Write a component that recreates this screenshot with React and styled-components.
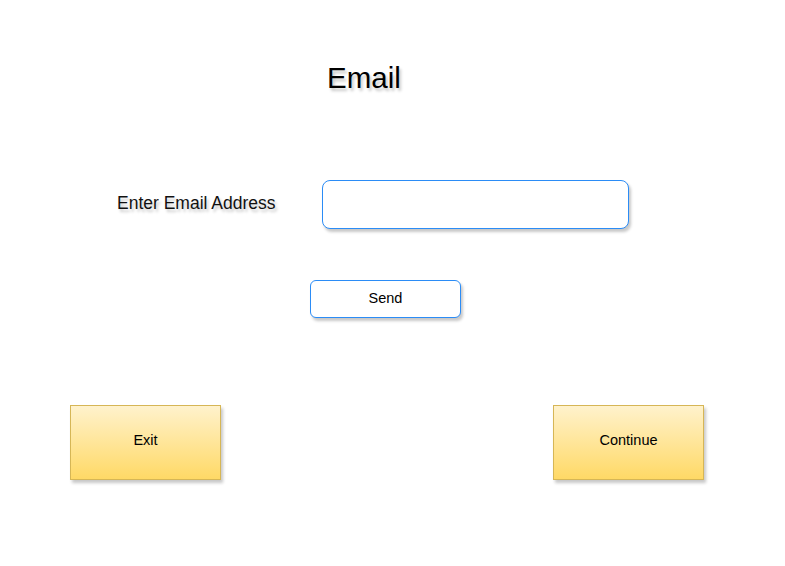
import React from "react";
import styled, { createGlobalStyle } from "styled-components";

const GlobalStyle = createGlobalStyle`
  html, body {
    margin: 0;
    padding: 0;
    background: #ffffff;
  }
  body {
    font-family: "Liberation Sans", Arial, Helvetica, sans-serif;
    color: #000000;
  }
`;

function App() {
  return (
    <>
      <GlobalStyle />
      <Page>
        <Title>Email</Title>
        <FormRow>
          <Label>Enter Email Address</Label>
          <Input type="text" />
        </FormRow>
        <SendButton>Send</SendButton>
        <Footer>
          <ActionButton>Exit</ActionButton>
          <ActionButton>Continue</ActionButton>
        </Footer>
      </Page>
    </>
  );
}

export default App;

const shadowText = "2px 3px 3px rgba(0, 0, 0, 0.22)";
const shadowBox = "2px 3px 3px rgba(0, 0, 0, 0.22)";

const Page = styled.div`
  width: 785px;
  height: 566px;
  display: flex;
  flex-direction: column;
  align-items: flex-start;
  padding-top: 63px;
  box-sizing: border-box;
`;

const Title = styled.h1`
  margin: 0 0 0 327px;
  font-size: 29.5px;
  line-height: 30px;
  font-weight: normal;
  text-shadow: ${shadowText};
`;

const FormRow = styled.div`
  display: flex;
  align-items: center;
  margin-top: 87px;
  margin-left: 117px;
`;

const Label = styled.span`
  width: 205px;
  padding-bottom: 4px;
  font-size: 17.5px;
  line-height: 20px;
  color: #111111;
  text-shadow: ${shadowText};
`;

const Input = styled.input`
  width: 307px;
  height: 49px;
  box-sizing: border-box;
  border: 1.5px solid #2b8cf6;
  border-radius: 8px;
  background: #ffffff;
  box-shadow: ${shadowBox};
  outline: none;
  padding: 0 10px;
  font-family: inherit;
  font-size: 15px;
`;

const SendButton = styled.button`
  margin: 51px 0 0 310px;
  width: 151px;
  height: 38px;
  box-sizing: border-box;
  border: 1.5px solid #2b8cf6;
  border-radius: 6px;
  background: #ffffff;
  box-shadow: ${shadowBox};
  font-family: inherit;
  font-size: 14.5px;
  color: #000000;
  padding: 0 0 3px;
  cursor: pointer;
`;

const Footer = styled.div`
  width: 100%;
  display: flex;
  justify-content: space-between;
  box-sizing: border-box;
  padding: 0 81px 0 70px;
  margin-top: 87px;
`;

const ActionButton = styled.button`
  width: 151px;
  height: 75px;
  box-sizing: border-box;
  border: 1px solid #d6b656;
  border-radius: 0;
  background: linear-gradient(180deg, #fff2cc 0%, #ffd966 100%);
  box-shadow: ${shadowBox};
  font-family: inherit;
  font-size: 14.5px;
  color: #000000;
  padding: 0 0 5px;
  cursor: pointer;
`;
